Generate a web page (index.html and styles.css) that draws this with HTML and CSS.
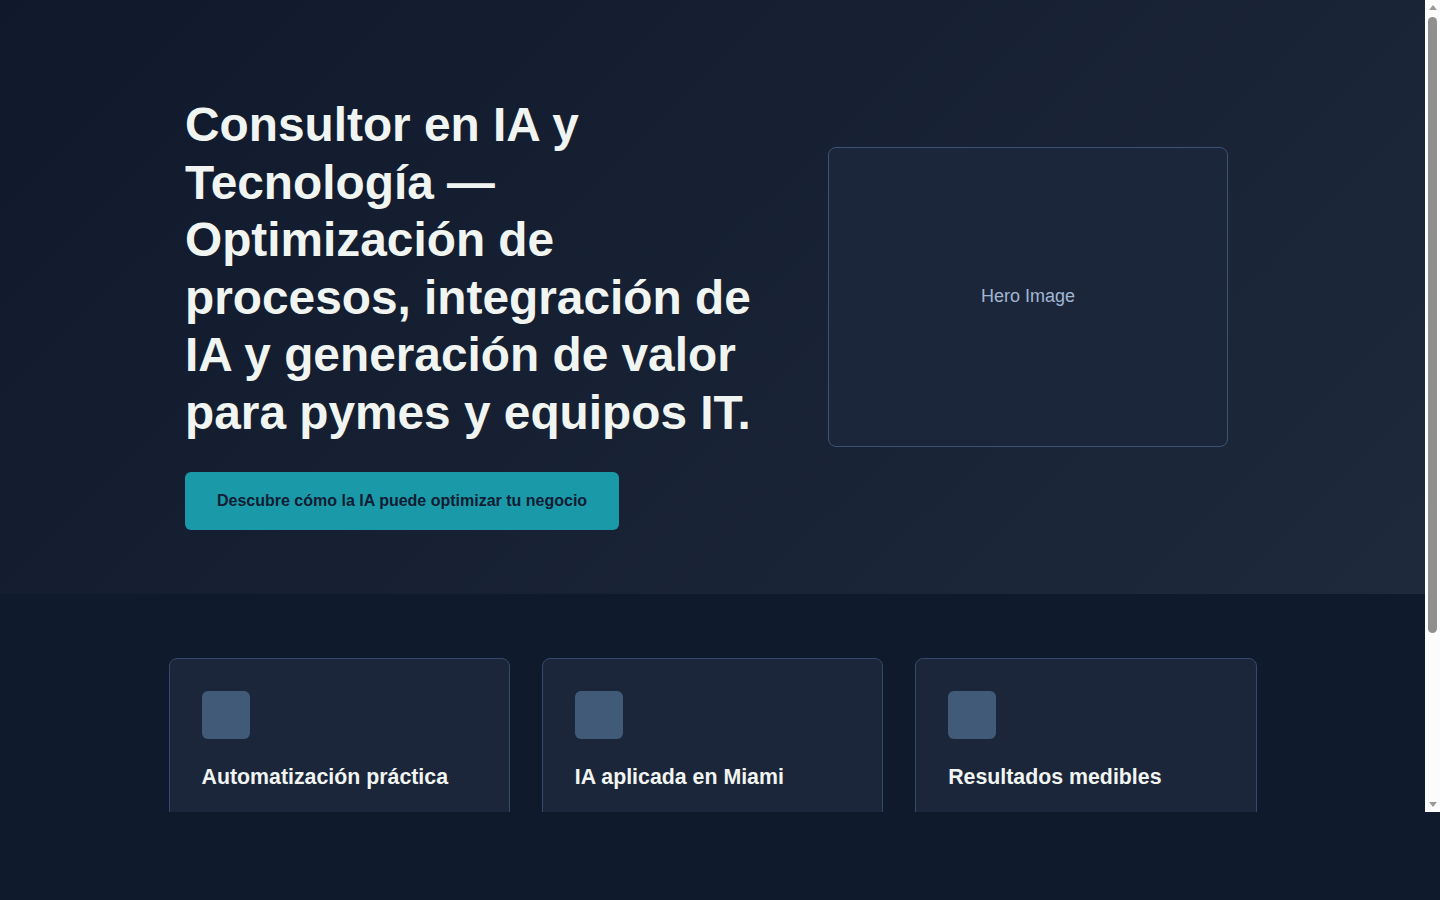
FILE: index.html
```html
<!DOCTYPE html>
<html lang="es">
<head>
<meta charset="utf-8">
<title>Consultor en IA y Tecnología</title>
<link rel="stylesheet" href="styles.css">
</head>
<body>
<div class="frame">
  <div class="viewport">
    <section class="hero">
      <div class="hero-inner">
        <div class="hero-text">
          <h1 class="hero-title">Consultor en IA y Tecnología — Optimización de procesos, integración de IA y generación de valor para pymes y equipos IT.</h1>
          <a class="cta" href="#">Descubre cómo la IA puede optimizar tu negocio</a>
        </div>
        <div class="hero-image">Hero Image</div>
      </div>
    </section>
    <section class="features">
      <div class="container">
        <div class="cards">
          <article class="card">
            <div class="card-icon"></div>
            <h3 class="card-title">Automatización práctica</h3>
          </article>
          <article class="card">
            <div class="card-icon"></div>
            <h3 class="card-title">IA aplicada en Miami</h3>
          </article>
          <article class="card">
            <div class="card-icon"></div>
            <h3 class="card-title">Resultados medibles</h3>
          </article>
        </div>
      </div>
    </section>
  </div>
  <div class="scrollbar" aria-hidden="true">
    <div class="sb-btn"><span class="arrow-up"></span></div>
    <div class="sb-track"><div class="sb-thumb"></div></div>
    <div class="sb-btn"><span class="arrow-down"></span></div>
  </div>
</div>
</body>
</html>
```
FILE: styles.css
```css
* { box-sizing: border-box; }
html, body {
  margin: 0;
  padding: 0;
  height: 100%;
  overflow: hidden;
  background: #0f1b2d;
  font-family: "Liberation Sans", Arial, sans-serif;
}
.frame {
  display: flex;
  height: 812px;
}
.viewport {
  flex: 1;
  min-width: 0;
  overflow: hidden;
  background: #0f1b2d;
}
.hero {
  background: linear-gradient(135deg, #0f192b 0%, #1e293b 100%);
  padding: 64px 197px 64px 185px;
}
.hero-inner {
  display: flex;
  justify-content: space-between;
  align-items: center;
}
.hero-text {
  width: 600px;
}
.hero-title {
  margin: 32px 0 30px;
  font-size: 47.8px;
  line-height: 57.6px;
  font-weight: 700;
  color: #f1f5f2;
}
.cta {
  display: inline-block;
  padding: 20px 32px;
  font-size: 16px;
  line-height: 18px;
  font-weight: 700;
  color: #0f1c33;
  background: #1a9aa9;
  border-radius: 6px;
  text-decoration: none;
}
.hero-image {
  width: 400px;
  height: 300px;
  border: 1px solid #3b5376;
  border-radius: 8px;
  background: #1c263a;
  color: #a2b6d2;
  font-size: 18px;
  display: flex;
  align-items: center;
  justify-content: center;
}
.features {
  padding: 64px 0 123px;
}
.container {
  max-width: 1152px;
  margin: 0 auto;
  padding: 0 32px;
}
.cards {
  display: grid;
  grid-template-columns: repeat(3, 1fr);
  gap: 32px;
}
.card {
  background: #1c263a;
  border: 1px solid #34496b;
  border-radius: 8px;
  padding: 32px;
  min-height: 250px;
}
.card-icon {
  width: 48px;
  height: 48px;
  border-radius: 6px;
  background: #415a78;
}
.card-title {
  margin: 24px 0 0;
  font-size: 21.33px;
  line-height: 28px;
  font-weight: 700;
  color: #f1f5f2;
}
/* scrollbar */
.scrollbar {
  width: 15px;
  flex: none;
  display: flex;
  flex-direction: column;
  background: #fcfcfc;
}
.sb-btn {
  height: 15px;
  flex: none;
  display: flex;
  align-items: center;
  justify-content: center;
}
.arrow-up {
  width: 0;
  height: 0;
  border-left: 4.5px solid transparent;
  border-right: 4.5px solid transparent;
  border-bottom: 5px solid #9a9a9a;
}
.arrow-down {
  width: 0;
  height: 0;
  border-left: 4.5px solid transparent;
  border-right: 4.5px solid transparent;
  border-top: 5px solid #9a9a9a;
}
.sb-track {
  flex: 1;
  padding: 2px 3px 0;
}
.sb-thumb {
  height: 616px;
  border-radius: 5px;
  background: #8f8f8f;
}
```
